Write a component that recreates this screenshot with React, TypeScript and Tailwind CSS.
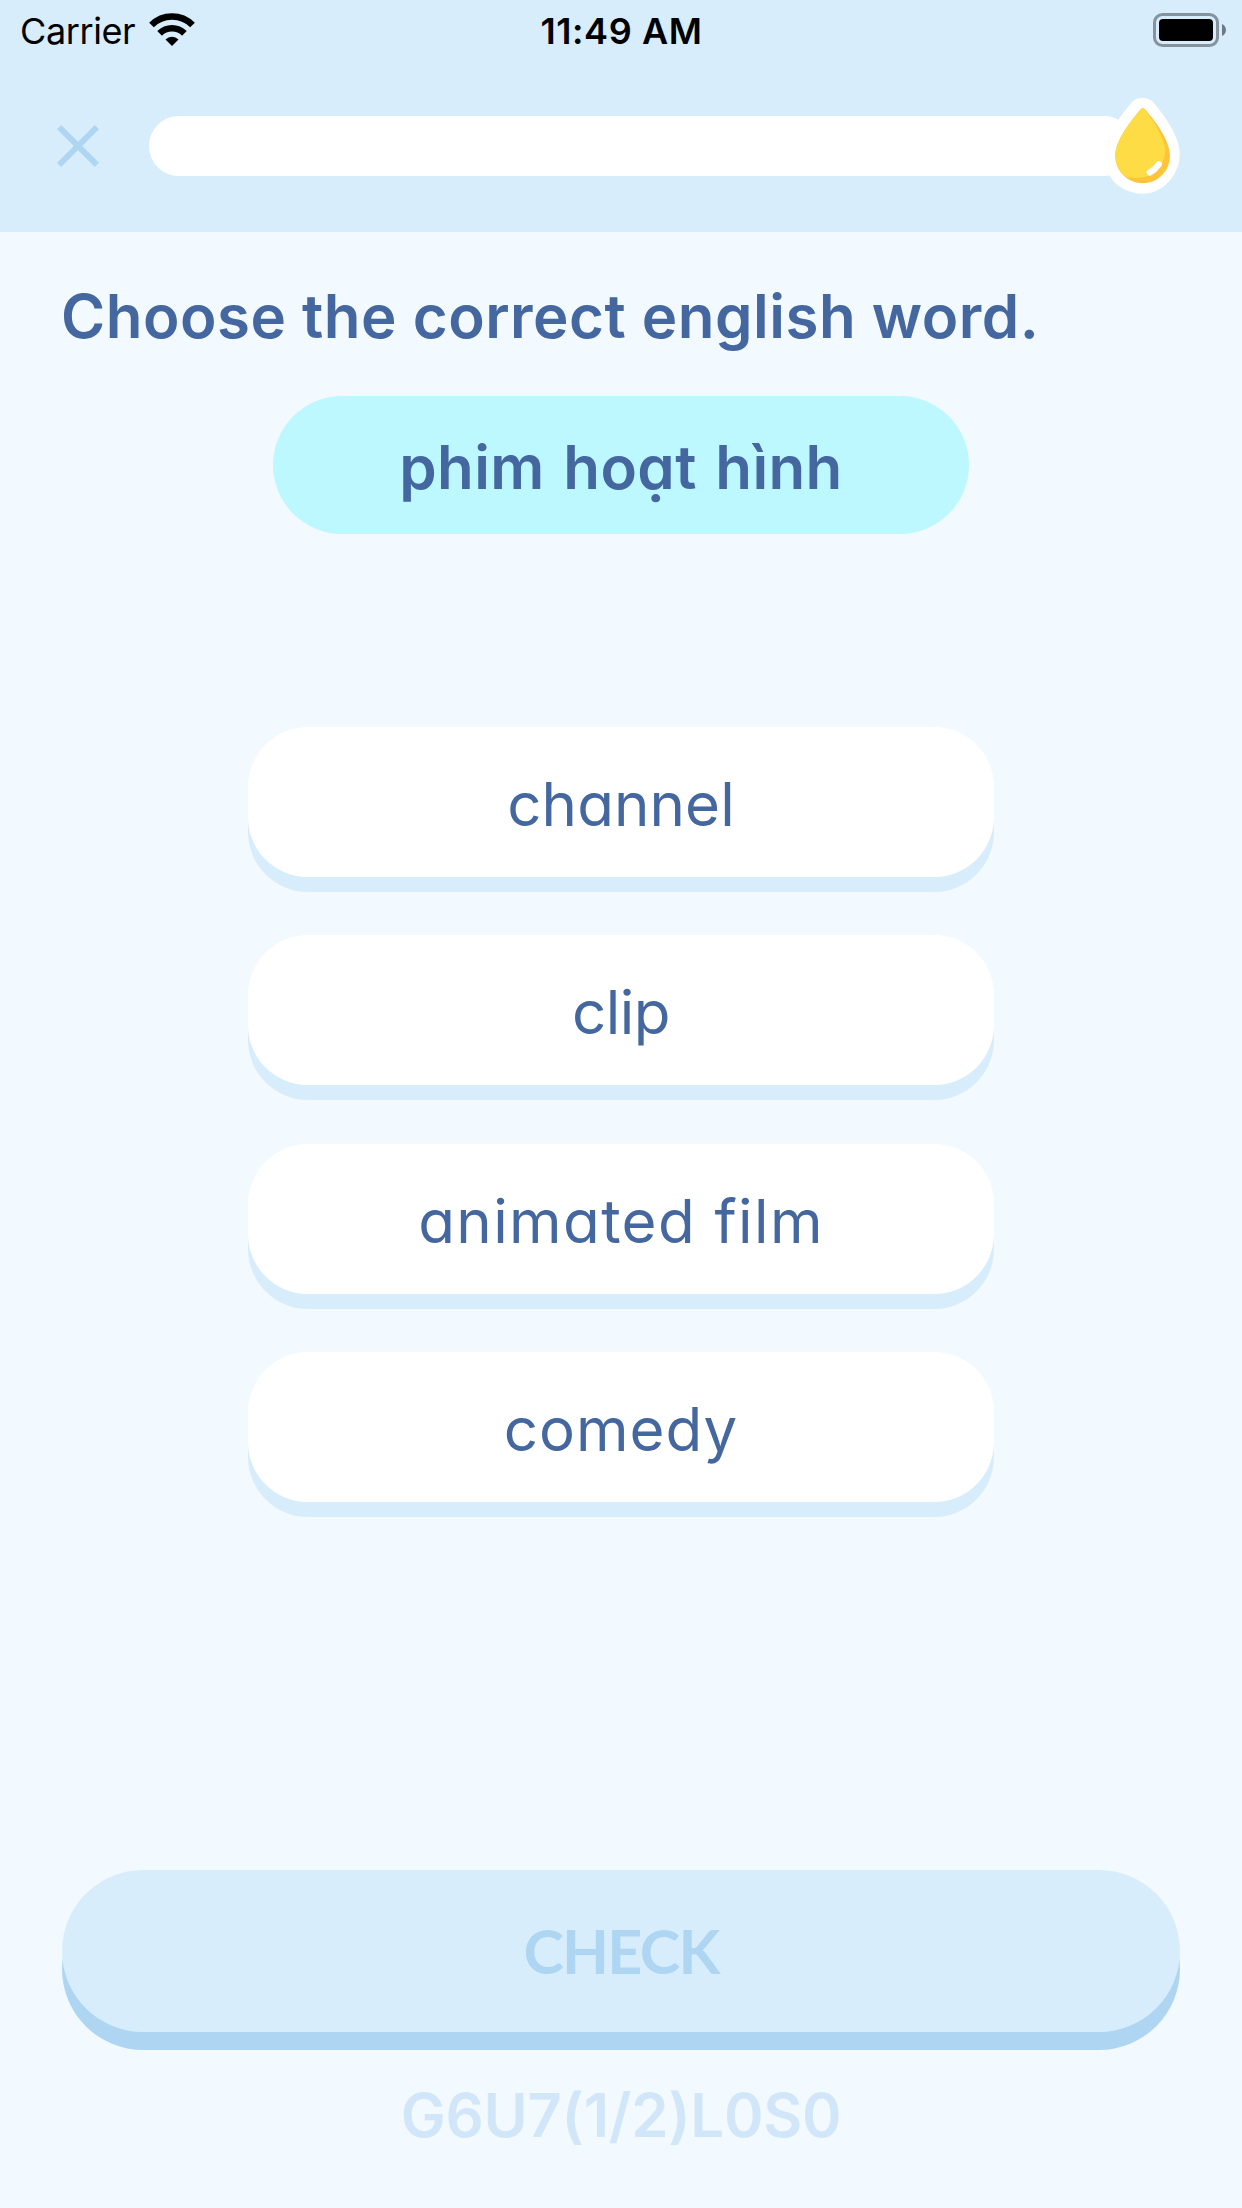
const options = [
  { label: "channel", tracking: "tracking-[0.1px]" },
  { label: "clip", tracking: "tracking-[-0.5px]" },
  { label: "animated film", tracking: "tracking-[1.4px]" },
  { label: "comedy", tracking: "tracking-[1px]" },
];

function WifiIcon() {
  return (
    <svg viewBox="0 0 46 33" className="h-[33px] w-[46px]" fill="none" stroke="#000">
      <path d="M2.5 12A29 29 0 0 1 43.5 12" strokeWidth="6.6" />
      <path d="M10.6 20.3A17.6 17.6 0 0 1 35.4 20.3" strokeWidth="6.6" />
      <path d="M23 33L16.5 26.4A9.3 9.3 0 0 1 29.5 26.4Z" fill="#000" stroke="none" />
    </svg>
  );
}

function BatteryIcon() {
  return (
    <svg viewBox="0 0 74 34" className="h-[34px] w-[74px]">
      <rect x="1.5" y="1.5" width="63" height="31" rx="8" fill="none" stroke="#84939d" strokeWidth="3" />
      <rect x="6" y="6" width="54" height="22" rx="4" fill="#000" />
      <path d="M69 11C74.3 13 74.3 21 69 23Z" fill="#6d7a83" />
    </svg>
  );
}

function DropIcon() {
  return (
    <svg viewBox="0 0 74 98" className="h-[98px] w-[74px]">
      <path
        d="M36.5 1C41.5 1 45 2.5 48 6C57 17 73.7 38 73.7 57C73.7 78 57 96.8 36.5 96.8C24 96.8 10 90 4 79V34L15 19C18.500 14 22 9.500 25.500 5.500C28.500 2.300 32 1 36.500 1Z"
        fill="#fff"
      />
      <path
        d="M34.500 12.500Q36.800 9.800 39.300 12.500C49 24 64 43 64 59A27.300 27.300 0 0 1 9.300 59C9.300 43 25 24 34.500 12.500Z"
        fill="#ffc43a"
      />
      <path
        d="M34.500 12.500Q36.800 9.800 39 12.500C46 22 59.200 42 59.200 53C59.200 68 47.500 81 31 81C26 81 20.500 80.500 17 77.500C12 72.500 9.300 66 9.300 59C9.300 43 25 24 34.500 12.500Z"
        fill="#fddc45"
      />
      <path d="M43.800 75.500Q48.500 73 52.800 67.300" fill="none" stroke="#fff" strokeWidth="6.200" strokeLinecap="round" />
    </svg>
  );
}

export default function App() {
  return (
    <div className="flex h-[2208px] w-[1242px] flex-col overflow-hidden bg-[#f2f9ff] font-['Inter',sans-serif] text-[60px] leading-[72px] text-[#4467a0] [font-feature-settings:'cv11']">
      <header className="flex h-[232px] shrink-0 flex-col bg-[#d8edfc]">
        <div className="grid h-[60px] grid-cols-[1fr_auto_1fr] items-start pt-[13px] pr-[16px] pl-[20px] text-[36px] leading-[36px] text-black [font-feature-settings:normal]">
          <div className="flex items-start">
            <span className="w-[129px] tracking-[-0.4px]">Carrier</span>
            <WifiIcon />
          </div>
          <span className="-ml-[3px] font-semibold tracking-[0.6px]">11:49 AM</span>
          <div className="-mr-[1px] flex justify-end">
            <BatteryIcon />
          </div>
        </div>
        <div className="flex h-[172px] items-center pl-[57px]">
          <button aria-label="Close" className="mr-[50px]">
            <svg viewBox="0 0 42 42" className="h-[42px] w-[42px]" stroke="#aed6f2" strokeWidth="6">
              <path d="M2.100 2.100L39.900 39.900M39.900 2.100L2.100 39.900" />
            </svg>
          </button>
          <div className="relative h-[60px] w-[985px] rounded-full bg-white">
            <div className="absolute -top-[19px] left-[957px]">
              <DropIcon />
            </div>
          </div>
        </div>
      </header>

      <main className="flex flex-col items-center">
        <h1 className="mt-[48px] self-start pl-[61px] font-semibold tracking-[0.5px]">
          Choose the correct english word.
        </h1>
        <div className="mt-[44px] flex h-[138px] w-[696px] items-center justify-center rounded-[69px] bg-[#bdf7ff] pt-[3px] font-semibold tracking-[0.4px] [word-spacing:3px]">
          phim hoạt hình
        </div>
        <div className="mt-[193px] flex flex-col gap-[58.33px]">
          {options.map((o) => (
            <button
              key={o.label}
              className="flex h-[150px] w-[746px] items-center justify-center rounded-[60px] bg-white pt-1 shadow-[0_15px_0_#d8edfc]"
            >
              <span className={o.tracking}>{o.label}</span>
            </button>
          ))}
        </div>
      </main>

      <footer className="mt-[368px] flex flex-col items-center font-semibold">
        <button className="flex h-[162px] w-[1118px] items-center justify-center rounded-[81px] bg-[#d8edfc] font-['Lato',sans-serif] text-[61px] font-bold tracking-[-1.7px] text-[#aed6f2] shadow-[0_18px_0_#aed6f2]">
          CHECK
        </button>
        <p className="mt-[47px] tracking-[-0.3px] text-[#d1e7f9]">G6U7(1/2)L0S0</p>
      </footer>
    </div>
  );
}
